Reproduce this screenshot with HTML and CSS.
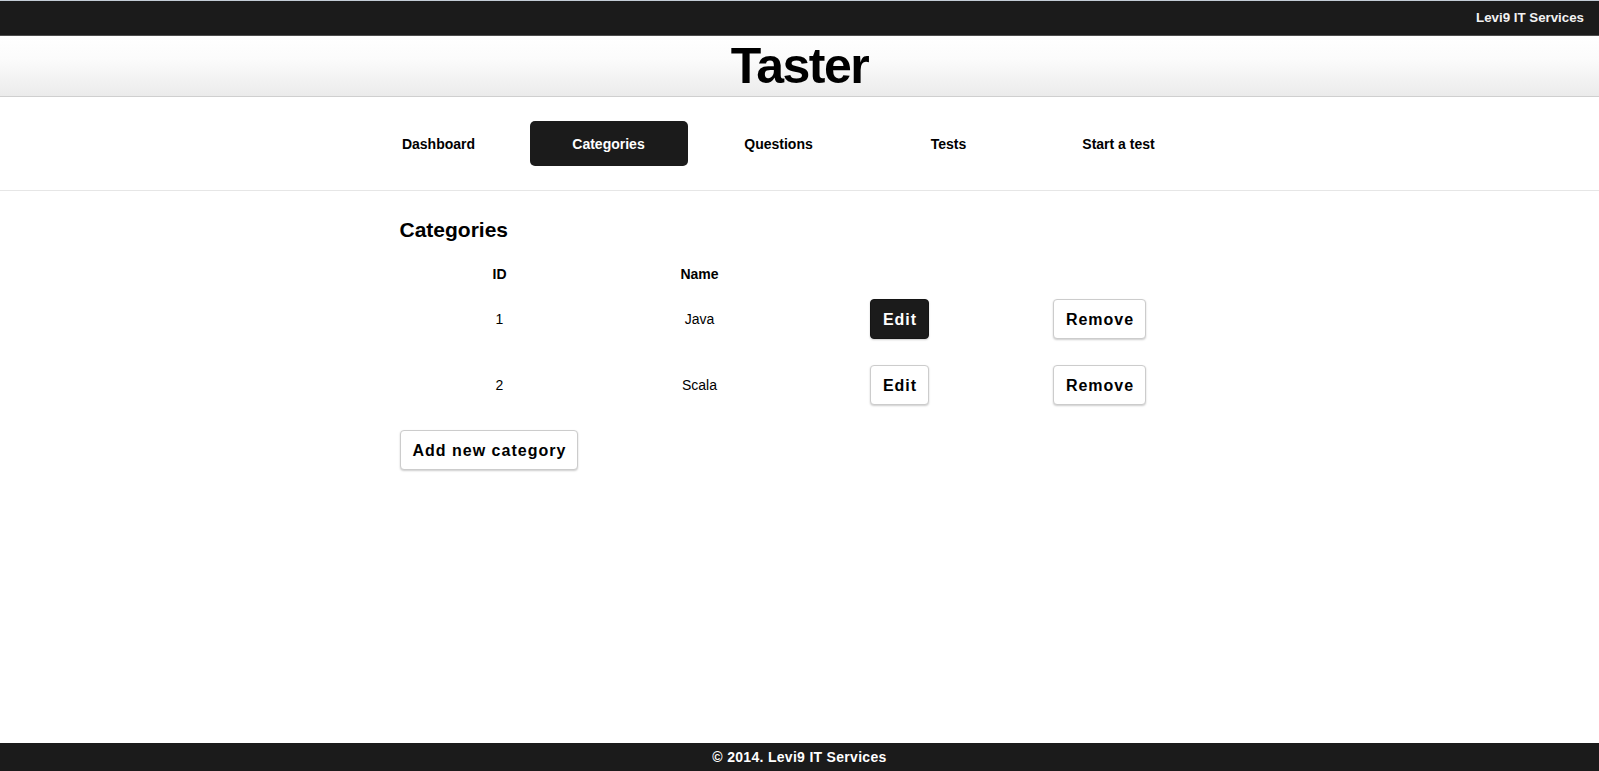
FILE: index.html
```html
<!DOCTYPE html>
<html lang="en">
<head>
<meta charset="utf-8">
<title>Taster</title>
<link rel="stylesheet" href="styles.css">
</head>
<body>
<div class="topbar"><span class="brand">Levi9 IT Services</span></div>
<header class="header"><h1 class="title">Taster</h1></header>
<nav class="nav">
  <ul class="nav-list">
    <li class="nav-item">Dashboard</li>
    <li class="nav-item active">Categories</li>
    <li class="nav-item">Questions</li>
    <li class="nav-item">Tests</li>
    <li class="nav-item">Start a test</li>
  </ul>
</nav>
<main class="content">
  <h2 class="page-title">Categories</h2>
  <table class="grid">
    <thead>
      <tr><th>ID</th><th>Name</th><th></th><th></th></tr>
    </thead>
    <tbody>
      <tr>
        <td>1</td><td>Java</td>
        <td><button class="btn btn-dark">Edit</button></td>
        <td><button class="btn">Remove</button></td>
      </tr>
      <tr>
        <td>2</td><td>Scala</td>
        <td><button class="btn">Edit</button></td>
        <td><button class="btn">Remove</button></td>
      </tr>
    </tbody>
  </table>
  <button class="btn btn-add">Add new category</button>
</main>
<footer class="footer">© 2014. Levi9 IT Services</footer>
</body>
</html>
```
FILE: styles.css
```css
html, body {
  margin: 0;
  padding: 0;
}
body {
  font-family: "Liberation Sans", Arial, sans-serif;
  font-size: 14px;
  color: #000;
  background: #fff;
  min-height: 100vh;
  display: flex;
  flex-direction: column;
}
.topbar {
  height: 34px;
  background: #1b1b1b;
  border-top: 1px solid #c3ccd6;
  border-bottom: 1px solid #4d4d4d;
  display: flex;
  justify-content: flex-end;
  align-items: center;
  padding-right: 15px;
}
.brand {
  color: #f2f2f2;
  font-weight: bold;
  font-size: 13.3px;
  line-height: 34px;
}
.header {
  height: 60px;
  background: linear-gradient(#ffffff 0%, #fbfbfb 40%, #ebebeb 100%);
  border-bottom: 1px solid #cfcfcf;
  text-align: center;
}
.title {
  margin: 0;
  font-size: 50px;
  line-height: 60px;
  font-weight: bold;
  letter-spacing: -1.5px;
  color: #000;
}
.nav {
  padding: 24px 0;
  border-bottom: 1px solid #e6e6e6;
}
.nav-list {
  list-style: none;
  margin: 0 auto;
  padding: 0;
  width: 880px;
  display: flex;
  gap: 12px;
}
.nav-item {
  width: 158px;
  height: 45px;
  box-sizing: border-box;
  padding-top: 2px;
  line-height: 43px;
  text-align: center;
  font-weight: bold;
  font-size: 14px;
  border-radius: 5px;
  color: #000;
}
.nav-item.active {
  background: #1b1b1b;
  color: #fff;
}
.content {
  width: 800px;
  margin: 0 auto;
  flex: 1;
}
.page-title {
  margin: 27px 0 0;
  font-size: 21px;
  line-height: 24px;
  font-weight: bold;
}
.grid {
  margin-top: 20px;
  width: 800px;
  table-layout: fixed;
  border-collapse: collapse;
}
.grid th {
  height: 24px;
  line-height: 24px;
  padding: 0;
  font-weight: bold;
  text-align: center;
}
.grid td {
  height: 66px;
  padding: 0;
  text-align: center;
  vertical-align: middle;
}
.btn {
  height: 40px;
  padding: 2px 11px 0 12px;
  border: 1px solid #cccccc;
  border-radius: 4px;
  background: #fff;
  color: #000;
  font-family: "Liberation Sans", Arial, sans-serif;
  font-size: 16px;
  font-weight: bold;
  letter-spacing: 1px;
  box-shadow: 0 1px 2px rgba(0, 0, 0, 0.2);
  cursor: pointer;
  vertical-align: middle;
}
.btn-dark {
  background: #1b1b1b;
  border-color: #151515;
  color: #fff;
}
.btn-add {
  margin-top: 12px;
  display: block;
}
.footer {
  height: 28px;
  line-height: 28px;
  background: #1b1b1b;
  color: #fff;
  text-align: center;
  font-weight: bold;
  font-size: 14px;
  letter-spacing: 0.3px;
}
```
